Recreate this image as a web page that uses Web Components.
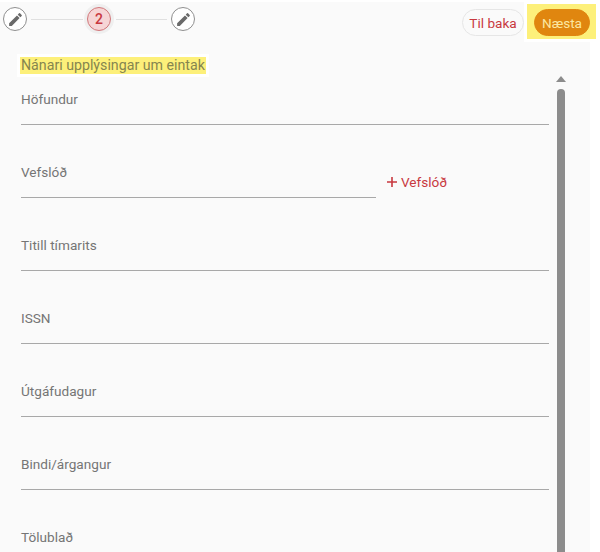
<!DOCTYPE html>
<html lang="is">
<head>
<meta charset="utf-8">
<title>Nánari upplýsingar</title>
<style>
    html, body { margin: 0; padding: 0; background: #fff; height: 552px; overflow: hidden; }
    body { font-family: "Roboto", "Liberation Sans", sans-serif; }
</style>
</head>
<body>
<item-form></item-form>

<script>
const PENCIL = `<svg viewBox="0 0 24 24" width="17" height="17"><path fill="#6a6a6a" d="M3 17.25V21h3.75L17.81 9.94l-3.75-3.75L3 17.25zM20.71 7.04a1 1 0 0 0 0-1.41l-2.34-2.34a1 1 0 0 0-1.41 0l-1.83 1.83 3.75 3.75 1.83-1.83z"/></svg>`;

class StepDot extends HTMLElement {
    connectedCallback() {
        const active = this.getAttribute('active');
        this.attachShadow({ mode: 'open' }).innerHTML = `
            <style>
                :host { display: block; flex: none; }
                .dot {
                    width: 24px; height: 24px; border-radius: 50%; box-sizing: border-box;
                    display: flex; align-items: center; justify-content: center;
                    border: 1px solid #8f8f8f; background: #fff;
                }
                .dot.active {
                    background: #f6d5d5; border-color: #d0777b; color: #c8393f;
                    font-size: 14px; font-weight: 500;
                    box-shadow: 0 0 0 3px #efefef;
                }
            </style>
            <div class="dot ${active ? 'active' : ''}">${active || PENCIL}</div>
        `;
    }
}

class StepBar extends HTMLElement {
    connectedCallback() {
        this.attachShadow({ mode: 'open' }).innerHTML = `
            <style>
                :host { display: flex; align-items: center; gap: 4px; flex: none; }
                .line { width: 52px; height: 1px; background: #e0e0e0; }
                .line + step-dot + .line { width: 51px; margin-left: 1px; }
            </style>
            <step-dot></step-dot><span class="line"></span>
            <step-dot active="2"></step-dot><span class="line"></span>
            <step-dot></step-dot>
        `;
    }
}

class PillButton extends HTMLElement {
    connectedCallback() {
        this.attachShadow({ mode: 'open' }).innerHTML = `
            <style>
                :host { display: block; flex: none; }
                button {
                    display: block; box-sizing: border-box; width: 62px; height: 27px; padding: 0; border-radius: 14px;
                    font: 400 13.6px "Roboto", "Liberation Sans", sans-serif;
                    border: 1px solid #e6e6e6; background: #fafafa; color: #c8393f;
                }
                :host([primary]) button {
                    width: 56px; background: #e0860f; border-color: #e0860f; color: #fbe7a0;
                }
            </style>
            <button><slot></slot></button>
        `;
    }
}

class TextField extends HTMLElement {
    connectedCallback() {
        this.attachShadow({ mode: 'open' }).innerHTML = `
            <style>
                :host { display: block; height: 73px; font-size: 13.6px; color: #757575; }
                .row { display: flex; align-items: flex-start; }
                .box { flex: 1; height: 35px; border-bottom: 1px solid #a8a8a8; line-height: 20px; }
                :host([short]) .box { flex: none; width: 355px; }
                .extra { margin: 10px 0 0 11px; line-height: 20px; color: #c8393f; display: flex; align-items: center; gap: 4px; }
                svg { display: block; }
            </style>
            <div class="row">
                <div class="box"><slot></slot></div>
                ${this.hasAttribute('short') ? `<div class="extra"><svg width="10" height="10" viewBox="0 0 10 10"><path d="M5 0v10M0 5h10" stroke="#c8393f" stroke-width="1.6"/></svg>Vefslóð</div>` : ''}
            </div>
        `;
    }
}

class FakeScrollbar extends HTMLElement {
    connectedCallback() {
        this.attachShadow({ mode: 'open' }).innerHTML = `
            <style>
                :host { display: flex; flex-direction: column; align-items: center; width: 10px; gap: 7px; padding-top: 4px; overflow: hidden; }
                .arrow { width: 0; height: 0; border: 5px solid transparent; border-top: 0; border-bottom: 6px solid #8c8c8c; flex: none; }
                .thumb { width: 8px; flex: 1 0 auto; background: #8c8c8c; border-radius: 4px 4px 0 0; }
            </style>
            <span class="arrow"></span><span class="thumb"></span>
        `;
    }
}

class ItemForm extends HTMLElement {
    connectedCallback() {
        this.attachShadow({ mode: 'open' }).innerHTML = `
            <style>
                :host { display: block; width: 590px; height: 550px; margin-top: 2px; background: #fafafa; font-family: "Roboto", "Liberation Sans", sans-serif; }
                .top { display: flex; align-items: flex-start; height: 34px; padding: 5px 0 0 3px; box-sizing: border-box; }
                .actions { margin: -3px -6px 0 auto; display: flex; align-items: flex-start; gap: 3px; }
                .actions > pill-button { margin-top: 5px; }
                .next-wrap { background: #fdf07a; padding: 5px 6px 3px 7px; outline: 3px solid #fff; }
                h2 { margin: 0; font-size: 14.2px; font-weight: 400; color: #85854f; line-height: 17px; display: inline-block; background: #fdf07a; padding: 0 1px; outline: 3px solid #fff; }
                .title { margin: 19px 0 0 20px; height: 17px; }
                .body { display: flex; padding-left: 21px; gap: 7px; height: 480px; overflow: hidden; }
                .fields { width: 528px; padding-top: 17px; }
            </style>
            <div class="top">
                <step-bar></step-bar>
                <div class="actions">
                    <pill-button>Til baka</pill-button>
                    <div class="next-wrap"><pill-button primary>Næsta</pill-button></div>
                </div>
            </div>
            <div class="title"><h2>Nánari upplýsingar um eintak</h2></div>
            <div class="body">
                <div class="fields">
                    <text-field>Höfundur</text-field>
                    <text-field short>Vefslóð</text-field>
                    <text-field>Titill tímarits</text-field>
                    <text-field>ISSN</text-field>
                    <text-field>Útgáfudagur</text-field>
                    <text-field>Bindi/árgangur</text-field>
                    <text-field>Tölublað</text-field>
                </div>
                <fake-scrollbar></fake-scrollbar>
            </div>
        `;
    }
}

customElements.define('step-dot', StepDot);
customElements.define('step-bar', StepBar);
customElements.define('pill-button', PillButton);
customElements.define('text-field', TextField);
customElements.define('fake-scrollbar', FakeScrollbar);
customElements.define('item-form', ItemForm);
</script>
</body>
</html>
